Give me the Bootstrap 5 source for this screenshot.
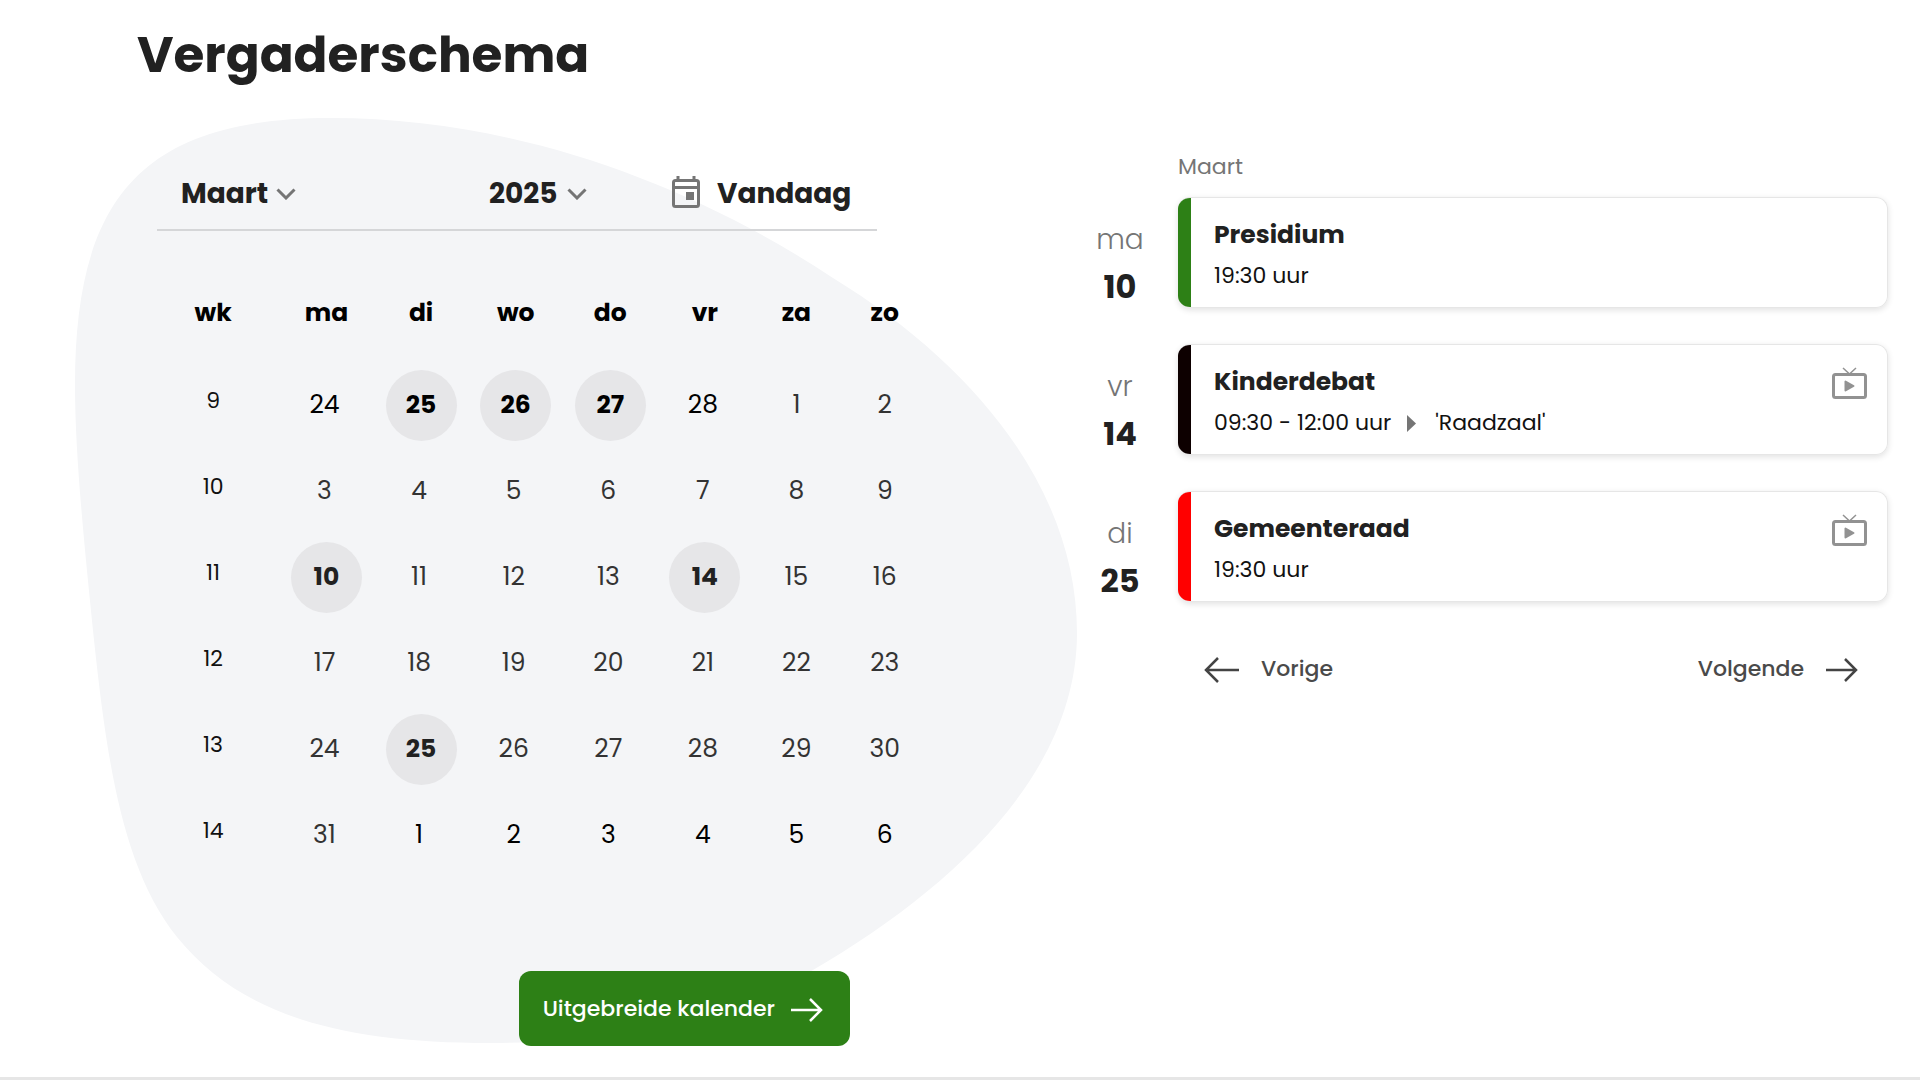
<!DOCTYPE html>
<html lang="nl">
<head>
<meta charset="utf-8">
<meta name="viewport" content="width=device-width, initial-scale=1">
<title>Vergaderschema</title>
<link href="https://cdn.jsdelivr.net/npm/bootstrap@5.3.0/dist/css/bootstrap.min.css" rel="stylesheet">
<style>
  body { font-family: Poppins, Inter, "Open Sans", sans-serif; color: #212121; background: #fff; }
  .schedule { border-bottom: 3px solid #e6e6e6; }
  .page-title { font-size: 50px; line-height: 72px; font-weight: 700; padding: 19px 0 0 137px; margin: 0; }
  .calendar-pane { position: relative; z-index: 0; padding: 78px 20px 31px 147px; }
  .blob { position: absolute; left: 0; top: 0; width: 100%; z-index: -1; }
  .calendar-body { max-width: 782px; }
  .toolbar { margin-left: 10px; max-width: 720px; padding: 0 20px 10px 24px; border-bottom: 2px solid #d5d6d8; }
  .toolbar .pick { height: 50px; font-size: 28px; line-height: 50px; font-weight: 700; color: #212121; border: 0; padding: 0; border-radius: 0;
    background: transparent url("data:image/svg+xml,%3Csvg xmlns='http://www.w3.org/2000/svg' viewBox='0 0 20 12' fill='none' stroke='%23757575' stroke-width='3'%3E%3Cpath d='M1.500 1.500 10 10l8.500-8.500'/%3E%3C/svg%3E") no-repeat right 19px / 20px 12px; }
  .pick-month { width: 115px; }
  .pick-year { width: 98px; }
  .month-slot { width: 308px; }
  .today { font-size: 28px; line-height: 50px; font-weight: 700; color: #212121; gap: 17px; margin-left: 85px; }
  .today svg { margin-bottom: 4px; }
  .weeks { table-layout: fixed; width: 100%; margin-top: 38px; text-align: center; color: #000; }
  .weeks th { font-size: 25px; line-height: 86px; font-weight: 700; padding-bottom: 6px; }
  .weeks td { height: 86px; padding: 0; vertical-align: middle; font-size: 25px; line-height: 36px; }
  .weeks td:nth-child(n+2):nth-child(-n+6) { padding-right: 4px; }
  .weeks td.week { font-size: 22px; padding-bottom: 8px; color: #111; }
  .weeks .cur { color: #333; }
  .weeks .hit { display: inline-flex; align-items: center; justify-content: center; width: 71px; height: 71px; margin-right: -4px; border-radius: 50%; background: #e6e6e8; color: #000; font-weight: 700; text-decoration: none; vertical-align: middle; }
  .weeks .hit.cur { color: #212121; }
  .more { background: #2d8016; color: #fff; font-size: 22px; line-height: 33px; font-weight: 500; border-radius: 12px; padding: 21px 27px 21px 24px; gap: 16px; text-decoration: none; margin: 93px 79px 0 0; }
  .agenda { padding: 59px 32px 0 0; }
  .agenda-month { font-size: 22px; line-height: 33px; color: #757575; margin: 0 0 14px 98px; font-weight: 400; }
  .agenda-item { gap: 18px; margin-bottom: 33px; }
  .agenda-date { width: 80px; text-align: center; padding-top: 20px; }
  .agenda-date .dow { font-size: 28px; line-height: 46px; font-weight: 300; color: #757575; }
  .agenda-date .num { font-size: 32px; line-height: 48px; font-weight: 700; }
  .event { border: 1px solid #e6e6e6; border-left: 0; border-radius: 12px; overflow: hidden; box-shadow: 0 2px 6px rgba(0,0,0,.12); color: #212121; text-decoration: none; height: 111px; }
  .event-bar { width: 13px; }
  .event-text { padding: 17px 20px 0 23px; }
  .event-title { font-size: 25px; line-height: 40px; font-weight: 700; margin: 0; }
  .event-time { font-size: 22px; line-height: 42px; color: #111; }
  .event-time svg { margin: 0 19px 0 16px; }
  .event-tv { margin: 22px 20px 0 0; }
  .pager { padding: 14px 30px 0 124px; }
  .pager a { font-size: 22px; line-height: 33px; font-weight: 500; color: #4a4a4a; text-decoration: none; gap: 22px; }
  @media (min-width: 1200px) {
    .calendar-pane { width: 56.25%; }
    .agenda { width: 43.75%; }
  }
</style>
<script src="https://cdn.jsdelivr.net/npm/bootstrap@5.3.0/dist/js/bootstrap.bundle.min.js"></script>
</head>
<body>
<main class="schedule">
  <h1 class="page-title">Vergaderschema</h1>
  <div class="row g-0">
    <section class="calendar-pane" aria-label="Kalender">
      <svg class="blob" viewBox="0 91 1080 960" aria-hidden="true"><path fill="#f4f5f7" d="M331 118C510 118 685 180 833 278C975 365 1077 490 1077 633C1077 775 950 890 813 970C720 1020 620 1043 490 1043C340 1043 240 1015 177 937C122 868 107 760 94 640C86 560 75 460 75 385C75 200 140 118 331 118Z"/></svg>
      <div class="calendar-body">
        <div class="toolbar d-flex align-items-center">
          <div class="month-slot">
            <select class="form-select pick pick-month" aria-label="Maand"><option>Maart</option></select>
          </div>
          <div>
            <select class="form-select pick pick-year" aria-label="Jaar"><option>2025</option></select>
          </div>
          <button type="button" class="btn today d-flex align-items-center p-0 border-0">
            <svg width="28" height="32" viewBox="0 0 28 32" fill="none" stroke="#757575" stroke-width="3" aria-hidden="true"><rect x="1.500" y="4.500" width="25" height="26" rx="2"/><path d="M2 11.500h24M6 0v4M22 0v4"/><path d="M14 16h8v8h-8z" fill="#757575" stroke="none"/></svg>
            Vandaag
          </button>
        </div>
        <table class="weeks">
          <colgroup><col style="width:16.9%"><col span="5" style="width:12.1%"><col style="width:11.3%"><col style="width:11.3%"></colgroup>
          <thead><tr><th scope="col">wk</th><th scope="col">ma</th><th scope="col">di</th><th scope="col">wo</th><th scope="col">do</th><th scope="col">vr</th><th scope="col">za</th><th scope="col">zo</th></tr></thead>
          <tbody>
            <tr><td class="week">9</td><td>24</td><td><a class="hit" href="#">25</a></td><td><a class="hit" href="#">26</a></td><td><a class="hit" href="#">27</a></td><td>28</td><td class="cur">1</td><td class="cur">2</td></tr>
            <tr class="cur"><td class="week">10</td><td>3</td><td>4</td><td>5</td><td>6</td><td>7</td><td>8</td><td>9</td></tr>
            <tr class="cur"><td class="week">11</td><td><a class="hit cur" href="#">10</a></td><td>11</td><td>12</td><td>13</td><td><a class="hit cur" href="#">14</a></td><td>15</td><td>16</td></tr>
            <tr class="cur"><td class="week">12</td><td>17</td><td>18</td><td>19</td><td>20</td><td>21</td><td>22</td><td>23</td></tr>
            <tr class="cur"><td class="week">13</td><td>24</td><td><a class="hit cur" href="#">25</a></td><td>26</td><td>27</td><td>28</td><td>29</td><td>30</td></tr>
            <tr><td class="week">14</td><td class="cur">31</td><td>1</td><td>2</td><td>3</td><td>4</td><td>5</td><td>6</td></tr>
          </tbody>
        </table>
        <div class="d-flex justify-content-end">
          <a class="more d-inline-flex align-items-center" href="#">Uitgebreide kalender
            <svg width="32" height="26" viewBox="0 0 32 26" fill="none" stroke="#fff" stroke-width="2.500" aria-hidden="true"><path d="M0 14h30M19 3l11 11-11 11"/></svg></a>
        </div>
      </div>
    </section>
    <section class="agenda" aria-label="Agenda">
      <h2 class="agenda-month">Maart</h2>
      <div class="agenda-item d-flex">
        <div class="agenda-date flex-shrink-0"><div class="dow">ma</div><div class="num">10</div></div>
        <a class="event d-flex flex-grow-1" href="#"><span class="event-bar" style="background:#2d8016"></span>
          <div class="event-text flex-grow-1"><h3 class="event-title">Presidium</h3><div class="event-time">19:30 uur</div></div></a>
      </div>
      <div class="agenda-item d-flex">
        <div class="agenda-date flex-shrink-0"><div class="dow">vr</div><div class="num">14</div></div>
        <a class="event d-flex flex-grow-1" href="#"><span class="event-bar" style="background:#0d0000"></span>
          <div class="event-text flex-grow-1"><h3 class="event-title">Kinderdebat</h3><div class="event-time d-flex align-items-center"><span>09:30 - 12:00 uur</span><svg width="9" height="17" viewBox="0 0 9 17" aria-hidden="true"><path fill="#757575" d="M0 0l9 8.500-9 8.500z"/></svg><span>'Raadzaal'</span></div></div>
          <svg class="event-tv flex-shrink-0" width="35" height="32" viewBox="0 0 35 32" fill="none" stroke="#929292" aria-label="Uitzending"><rect x="1.500" y="7.500" width="32" height="23" rx="2" stroke-width="3"/><path d="M11 1l6.500 6L24 1" stroke-width="1.500"/><path d="M13.500 14.500v9l8-4.500z" fill="#929292" stroke-width="2" stroke-linejoin="round"/></svg></a>
      </div>
      <div class="agenda-item d-flex">
        <div class="agenda-date flex-shrink-0"><div class="dow">di</div><div class="num">25</div></div>
        <a class="event d-flex flex-grow-1" href="#"><span class="event-bar" style="background:#f00"></span>
          <div class="event-text flex-grow-1"><h3 class="event-title">Gemeenteraad</h3><div class="event-time">19:30 uur</div></div>
          <svg class="event-tv flex-shrink-0" width="35" height="32" viewBox="0 0 35 32" fill="none" stroke="#929292" aria-label="Uitzending"><rect x="1.500" y="7.500" width="32" height="23" rx="2" stroke-width="3"/><path d="M11 1l6.500 6L24 1" stroke-width="1.500"/><path d="M13.500 14.500v9l8-4.500z" fill="#929292" stroke-width="2" stroke-linejoin="round"/></svg></a>
      </div>
      <nav class="pager d-flex justify-content-between" aria-label="Bladeren">
        <a class="d-flex align-items-center" href="#"><svg width="35" height="28" viewBox="0 0 35 28" fill="none" stroke="#444" stroke-width="2.500" aria-hidden="true"><path d="M35 15H2M14 3L2 15l12 12"/></svg>Vorige</a>
        <a class="d-flex align-items-center" href="#">Volgende<svg width="32" height="26" viewBox="0 0 32 26" fill="none" stroke="#444" stroke-width="2.500" aria-hidden="true"><path d="M0 14h30M19 3l11 11-11 11"/></svg></a>
      </nav>
    </section>
  </div>
</main>
</body>
</html>
